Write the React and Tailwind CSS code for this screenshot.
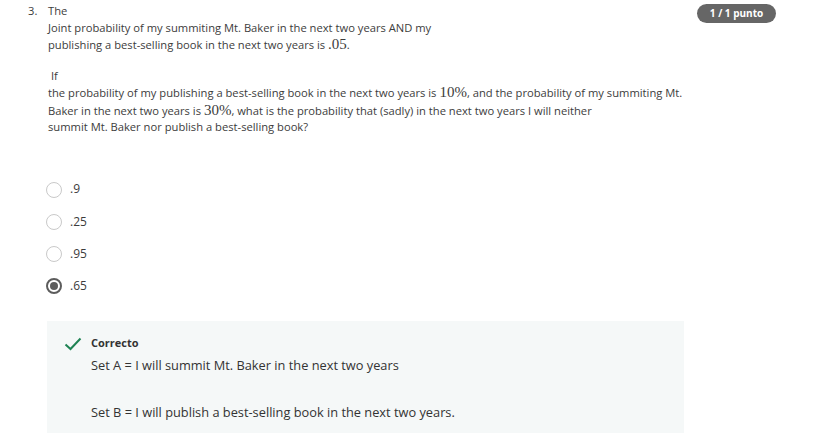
import React from "react";

function Radio({ checked }) {
  return checked ? (
    <span className="w-[16px] h-[16px] rounded-full border-[2px] border-[#5c5c5c] flex items-center justify-center shrink-0">
      <span className="w-[8px] h-[8px] rounded-full bg-[#5c5c5c]" />
    </span>
  ) : (
    <span className="w-[16px] h-[16px] rounded-full border-[1.5px] border-[#c9c9c9] shrink-0" />
  );
}

function M({ children }) {
  return <span className="font-['Liberation_Serif',serif] text-[15px]">{children}</span>;
}

export default function App() {
  const opts = [
    { l: ".9", c: false },
    { l: ".25", c: false },
    { l: ".95", c: false },
    { l: ".65", c: true },
  ];
  return (
    <div className="w-[840px] h-[433px] overflow-hidden bg-white font-['Open_Sans',sans-serif] text-[#3c3c3c]">
      <div className="flex pl-[28px] pt-[3px]">
        <div className="w-[20px] text-[11.2px] leading-[16.5px] shrink-0">3.</div>
        <div className="flex-1 text-[11.2px] leading-[16.5px] whitespace-nowrap">
          <p>The</p>
          <p>Joint probability of my summiting Mt. Baker in the next two years AND my</p>
          <p>
            publishing a best-selling book in the next two years is <M>.05</M>.
          </p>
          <p className="mt-[14px] pl-[3px]">If</p>
          <p>
            the probability of my publishing a best-selling book in the next two years is <M>10%</M>, and the probability of my summiting Mt.
          </p>
          <p>
            Baker in the next two years is <M>30%</M>, what is the probability that (sadly) in the next two years I will neither
          </p>
          <p>summit Mt. Baker nor publish a best-selling book?</p>
          <div className="mt-[46px] -ml-[2px] flex flex-col gap-[16.3px]">
            {opts.map((o) => (
              <div key={o.l} className="flex items-center gap-[8px] h-[16px]">
                <Radio checked={o.c} />
                <span className="text-[12px]">{o.l}</span>
              </div>
            ))}
          </div>
          <div className="mt-[27px] -ml-[1px] w-[637px] h-[120px] bg-[#f5f8f8] pt-[14px] pl-[17px]">
            <div className="flex">
              <svg width="18" height="14" viewBox="0 0 18 14" className="mt-[2px] shrink-0">
                <path d="M1.5 7.5 L6.5 12 L16.5 1.5" fill="none" stroke="#1f8354" strokeWidth="2" />
              </svg>
              <div className="ml-[9px]">
                <div className="text-[11px] font-bold leading-[16px] text-[#333]">Correcto</div>
                <p className="text-[12.8px] leading-[18px] mt-[5px] text-[#333]">Set A = I will summit Mt. Baker in the next two years</p>
                <p className="text-[12.8px] leading-[18px] mt-[29px] text-[#333]">Set B = I will publish a best-selling book in the next two years.</p>
              </div>
            </div>
          </div>
        </div>
        <div className="shrink-0 mt-[1px] mr-[64px] h-[19px] w-[79px] rounded-full bg-[#666] text-white text-[10px] font-bold flex items-center justify-center">
          1 / 1 punto
        </div>
      </div>
    </div>
  );
}
